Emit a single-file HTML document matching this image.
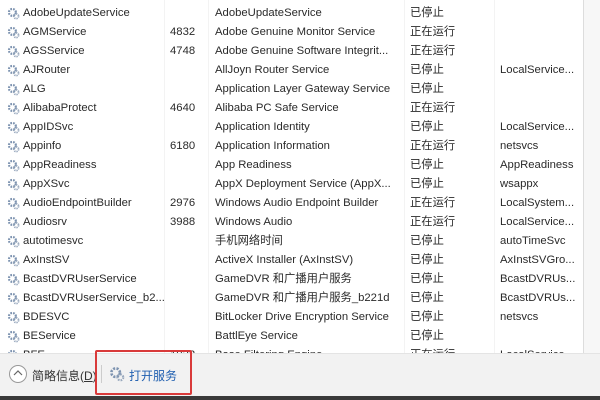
<!DOCTYPE html><html><head><meta charset="utf-8"><style>
body{margin:0;width:600px;height:400px;overflow:hidden;background:#fff;font-family:"Liberation Sans","Noto Sans CJK SC",sans-serif;font-size:11.3px;color:#2a2a2a;position:relative}
.r{position:absolute;left:0;width:584px;height:19px;line-height:19px;white-space:nowrap}
.r span{position:absolute;top:0}
.ic{position:absolute;left:7px;top:3px;width:13px;height:13px}
.c1{left:23px}.c2{left:170px}.c3{left:215px}.c4{left:410px}.c5{left:500px}
.vl{position:absolute;top:0;height:353px;width:1px;background:#f3f3f3}
</style></head><body>
<div class="vl" style="left:164px"></div><div class="vl" style="left:208px"></div><div class="vl" style="left:404px"></div><div class="vl" style="left:494px"></div>
<div style="position:absolute;left:583px;top:0;width:1px;height:353px;background:#ddd"></div>
<div style="position:absolute;left:584px;top:0;width:16px;height:353px;background:#f7f7f7"></div>
<div id="rows"></div>
<script>
const d=[["AdobeUpdateService","","AdobeUpdateService","已停止",""],
["AGMService","4832","Adobe Genuine Monitor Service","正在运行",""],
["AGSService","4748","Adobe Genuine Software Integrit...","正在运行",""],
["AJRouter","","AllJoyn Router Service","已停止","LocalService..."],
["ALG","","Application Layer Gateway Service","已停止",""],
["AlibabaProtect","4640","Alibaba PC Safe Service","正在运行",""],
["AppIDSvc","","Application Identity","已停止","LocalService..."],
["Appinfo","6180","Application Information","正在运行","netsvcs"],
["AppReadiness","","App Readiness","已停止","AppReadiness"],
["AppXSvc","","AppX Deployment Service (AppX...","已停止","wsappx"],
["AudioEndpointBuilder","2976","Windows Audio Endpoint Builder","正在运行","LocalSystem..."],
["Audiosrv","3988","Windows Audio","正在运行","LocalService..."],
["autotimesvc","","手机网络时间","已停止","autoTimeSvc"],
["AxInstSV","","ActiveX Installer (AxInstSV)","已停止","AxInstSVGro..."],
["BcastDVRUserService","","GameDVR 和广播用户服务","已停止","BcastDVRUs..."],
["BcastDVRUserService_b2...","","GameDVR 和广播用户服务_b221d","已停止","BcastDVRUs..."],
["BDESVC","","BitLocker Drive Encryption Service","已停止","netsvcs"],
["BEService","","BattlEye Service","已停止",""],
["BFE","1032","Base Filtering Engine","正在运行","LocalService..."]];
const g='<svg class="ic" viewBox="0 0 12 12"><circle cx="5" cy="5" r="3.2" fill="none" stroke="#7d93b0" stroke-width="2" stroke-dasharray="1.6 1"/><circle cx="8.5" cy="8.5" r="2.2" fill="none" stroke="#98a8bd" stroke-width="1.6" stroke-dasharray="1.2 .8"/></svg>';
let h='';d.forEach((r,i)=>{h+=`<div class="r" style="top:${4+i*19}px">${g}<span class="c1">${r[0]}</span><span class="c2">${r[1]}</span><span class="c3">${r[2]}</span><span class="c4">${r[3]}</span><span class="c5">${r[4]}</span></div>`});
document.getElementById('rows').innerHTML=h;
</script>
<div style="position:absolute;left:0;top:353px;width:600px;height:43px;background:#f2f2f2;border-top:1px solid #e4e4e4"></div>
<div style="position:absolute;left:9px;top:365px;width:16px;height:16px;border:1px solid #999;border-radius:50%;background:#fff"></div>
<svg style="position:absolute;left:12px;top:369px" width="12" height="8"><path d="M2 6 L6 2 L10 6" fill="none" stroke="#666" stroke-width="1.2"/></svg>
<div style="position:absolute;left:32px;top:367px;font-size:12px;color:#333">简略信息(<u>D</u>)</div>
<div style="position:absolute;left:101px;top:365px;width:1px;height:18px;background:#ccc"></div>
<svg style="position:absolute;left:109px;top:366px" width="16" height="16" viewBox="0 0 12 12"><circle cx="5" cy="5" r="3.2" fill="none" stroke="#7d93b0" stroke-width="2" stroke-dasharray="1.6 1"/><circle cx="8.5" cy="8.5" r="2.2" fill="none" stroke="#98a8bd" stroke-width="1.6" stroke-dasharray="1.2 .8"/></svg>
<div style="position:absolute;left:129px;top:367px;font-size:12px;color:#1f5fb0">打开服务</div>
<div style="position:absolute;left:95px;top:350px;width:93px;height:41px;border:2px solid #d93a3a;border-radius:2px"></div>
<div style="position:absolute;left:0;top:396px;width:600px;height:4px;background:#3a3a3a"></div>
</body></html>
